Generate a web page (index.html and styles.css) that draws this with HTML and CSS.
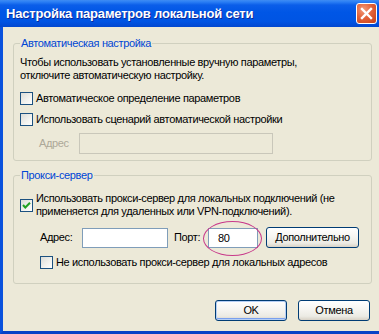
FILE: index.html
```html
<!DOCTYPE html>
<html lang="ru">
<head>
<meta charset="utf-8">
<title>Настройка параметров локальной сети</title>
<link rel="stylesheet" href="styles.css">
</head>
<body>
<div class="window">
  <div class="titlebar">
    <span class="title">Настройка параметров локальной сети</span>
    <span class="close"><svg width="19" height="19" viewBox="0 0 19 19"><path d="M5 5 L14 14 M14 5 L5 14" stroke="#fff" stroke-width="2.4" stroke-linecap="square"/></svg></span>
  </div>
  <div class="client">
    <fieldset class="group group-auto">
      <legend>Автоматическая настройка</legend>
      <p class="note">Чтобы использовать установленные вручную параметры,<br>отключите автоматическую настройку.</p>
      <div class="check auto-detect"><span class="cb"></span><span>Автоматическое определение параметров</span></div>
      <div class="check auto-script"><span class="cb"></span><span>Использовать сценарий автоматической настройки</span></div>
      <div class="field-row"><span class="field-label disabled">Адрес</span><span class="edit edit-disabled"></span></div>
    </fieldset>
    <fieldset class="group group-proxy">
      <legend>Прокси-сервер</legend>
      <div class="check check-multi"><span class="cb checked"><svg width="11" height="11" viewBox="0 0 11 11"><path d="M2 5 L4.3 7.5 L9 2.8" fill="none" stroke="#21a121" stroke-width="2"/></svg></span><span>Использовать прокси-сервер для локальных подключений (не<br>применяется для удаленных или VPN-подключений).</span></div>
      <div class="proxy-row">
        <span class="lbl-addr">Адрес:</span><span class="edit edit-addr"></span><span class="lbl-port">Порт:</span><span class="port-wrap"><span class="edit edit-port">80</span><span class="ring"></span></span><span class="btn btn-adv">Дополнительно</span>
      </div>
      <div class="check bypass"><span class="cb"></span><span>Не использовать прокси-сервер для локальных адресов</span></div>
    </fieldset>
    <div class="actions"><span class="btn btn-default">OK</span><span class="btn">Отмена</span></div>
  </div>
</div>
</body>
</html>
```
FILE: styles.css
```css
* { box-sizing: border-box; }
html, body { margin: 0; padding: 0; }
body {
  width: 379px;
  height: 334px;
  overflow: hidden;
  background: #ece9d8;
  font-family: "Liberation Sans", Arial, sans-serif;
  font-size: 11px;
  line-height: 13px;
  letter-spacing: -0.35px;
  color: #000;
}
.window {
  width: 379px;
  height: 334px;
  display: flex;
  flex-direction: column;
}
.titlebar {
  flex: none;
  height: 27px;
  display: flex;
  align-items: center;
  justify-content: space-between;
  padding: 0 2px 0 6px;
  background: linear-gradient(to bottom, #3f8cf3 0, #2a7ef4 2px, #0b5ee9 5px, #0056e6 45%, #0054e3 80%, #0247cf 100%);
}
.title {
  color: #fff;
  font-weight: bold;
  font-size: 13px;
  letter-spacing: -0.2px;
  text-shadow: 1px 1px 0 #0c2a9a;
}
.close {
  width: 21px;
  height: 21px;
  display: flex;
  align-items: center;
  justify-content: center;
  border: 1px solid #fff;
  border-radius: 3px;
  background: radial-gradient(circle at 35% 30%, #f19b7c 0, #e3633a 45%, #c63f16 100%);
}
.client {
  flex: 1;
  display: flex;
  flex-direction: column;
  border-left: 3px solid #0a52dd;
  border-bottom: 3px solid #0842c6;
  padding: 10px 7px 0 10px;
}
.group {
  margin: 0;
  min-width: 0;
  border: 1px solid #d0d0bf;
  border-radius: 3px;
  padding: 0 6px 6px 6px;
}
.group legend {
  padding: 0 1px;
  color: #0046d5;
  line-height: 13px;
}
.group-proxy {
  margin-top: 8px;
  padding-bottom: 14px;
}
.note {
  margin: 6px 0 0 0;
}
.check {
  display: flex;
  align-items: center;
  gap: 3px;
}
.cb {
  flex: none;
  width: 13px;
  height: 13px;
  border: 1px solid #1c5180;
  background: linear-gradient(135deg, #dcdcd7 0%, #f3f3ef 60%, #fff 100%);
  display: flex;
  align-items: center;
  justify-content: center;
}
.auto-detect { margin-top: 10px; }
.auto-script { margin-top: 8px; }
.field-row {
  margin-top: 7px;
  display: flex;
  align-items: center;
  padding-left: 19px;
}
.field-label { width: 40px; }
.disabled { color: #aca899; }
.edit {
  display: block;
  height: 20px;
  border: 1px solid #7f9db9;
  background: #fff;
}
.edit-disabled {
  width: 194px;
  height: 21px;
  border-color: #c9c7ba;
  background: #ece9d8;
}
.check-multi { margin-top: 10px; }
.proxy-row {
  margin-top: 9px;
  display: flex;
  align-items: center;
  padding-left: 20px;
}
.lbl-addr { width: 42px; }
.edit-addr { width: 86px; }
.lbl-port { width: 34px; margin-left: 6px; }
.port-wrap { position: relative; display: block; }
.edit-port {
  width: 50px;
  padding-left: 9px;
  line-height: 18px;
}
.ring {
  position: absolute;
  left: -5px;
  right: -4px;
  top: -7px;
  bottom: -8px;
  border: 1px solid #c8388a;
  border-radius: 50%;
}
.btn {
  display: block;
  height: 21px;
  line-height: 19px;
  text-align: center;
  border: 1px solid #003c74;
  border-radius: 3px;
  background: linear-gradient(to bottom, #fff 0%, #f6f5f1 45%, #ecebe4 80%, #d8d2c6 100%);
}
.btn-adv { width: 93px; margin-left: 8px; }
.bypass {
  margin-top: 8px;
  padding-left: 20px;
}
.actions {
  margin-top: 16px;
  display: flex;
  justify-content: flex-end;
  gap: 11px;
  padding-right: 2px;
}
.actions .btn { width: 72px; }
.btn-default {
  box-shadow: inset 0 0 0 1px #b6cff5, inset 0 -2px 0 0 #7aa0ee;
}
```
